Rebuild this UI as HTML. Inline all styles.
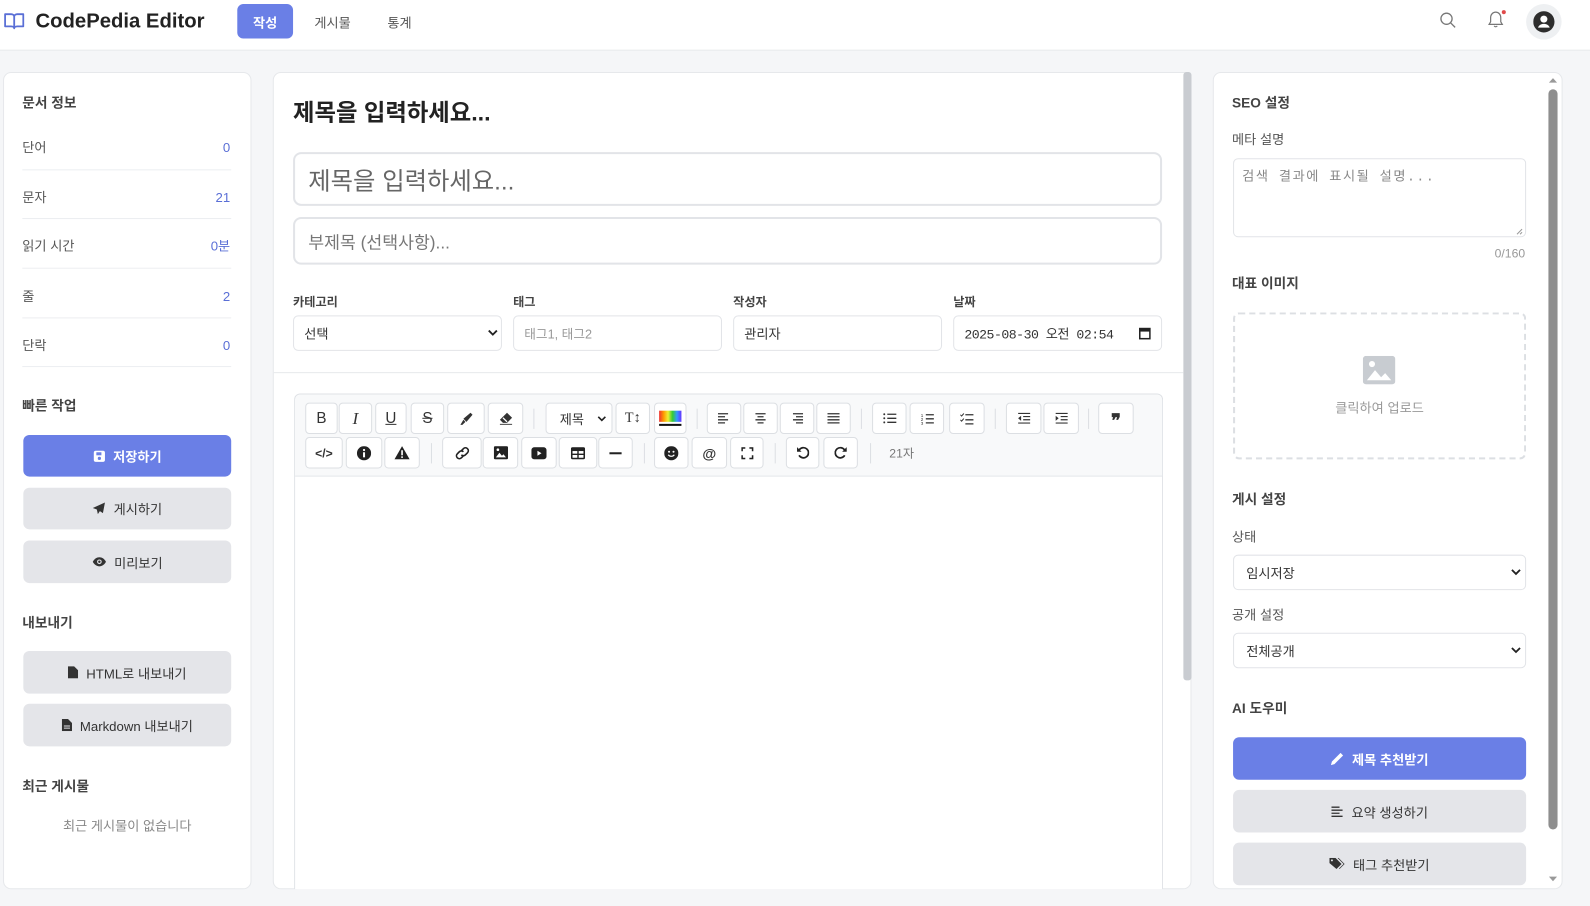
<!DOCTYPE html>
<html><head><meta charset="utf-8">
<style>
*{box-sizing:border-box;margin:0;padding:0}
html,body{width:1590px;height:906px;overflow:hidden;background:#f5f6f8;font-family:"Liberation Sans","Noto Sans CJK KR",sans-serif;color:#333}
#s{position:absolute;left:0;top:0;width:1568px;height:893px;transform:scale(1.01403);transform-origin:0 0}
.a{position:absolute}
.card{position:absolute;background:#fff;border:1px solid #e6e8eb;border-radius:8px}
.h{font-size:13.5px;font-weight:bold;color:#444;height:20px;line-height:20px}
.lbl{font-size:13px;color:#555;height:20px;line-height:20px}
.val{font-size:13px;color:#5a6fd6;height:20px;line-height:20px;text-align:right}
.sep{position:absolute;height:1px;background:#eceef1}
.btn{position:absolute;border-radius:6px;display:flex;align-items:center;justify-content:center;font-size:13px;gap:8px}
.pri{background:#6a7fe6;color:#fff;font-weight:bold}
.sec{background:#e4e5e9;color:#333}
.fld{position:absolute;border:1px solid #e2e4e8;border-radius:5px;background:#fff;font-size:13px;display:flex;align-items:center;padding-left:10px}
.tb{position:absolute;height:31px;border:1px solid #dcdfe3;border-radius:4px;background:#fff;display:flex;align-items:center;justify-content:center;font-size:14px;color:#333}
.vs{position:absolute;width:1px;height:20px;background:#dcdfe3}
</style></head><body><div id="s">
<!-- header -->
<div class="a" style="left:0;top:0;width:1568px;height:50px;background:#fff;border-bottom:1px solid #e6e8eb"></div>
<svg class="a" style="left:4px;top:12px" width="20" height="18" viewBox="0 0 20 18"><path d="M1 2h6c1.5 0 3 1 3 2.5V16c0-1-1-2-3-2H1z M19 2h-6c-1.5 0-3 1-3 2.5V16c0-1 1-2 3-2h6z" fill="none" stroke="#5a6fd6" stroke-width="1.8" stroke-linejoin="round"/></svg>
<div class="a" style="left:35px;top:9px;font-size:20px;font-weight:bold;color:#222;line-height:24px">CodePedia Editor</div>
<div class="btn pri" style="left:234px;top:4px;width:55px;height:34px;font-size:13px">작성</div>
<div class="a" style="left:310px;top:12px;font-size:13px;color:#555">게시물</div>
<div class="a" style="left:382px;top:12px;font-size:13px;color:#555">통계</div>
<svg class="a" style="left:1419px;top:11px" width="18" height="18" viewBox="0 0 18 18"><circle cx="7.5" cy="7.5" r="5.5" fill="none" stroke="#777" stroke-width="1.3"/><path d="M11.5 11.5l4.5 4.5" stroke="#777" stroke-width="1.3"/></svg>
<svg class="a" style="left:1466px;top:9px" width="20" height="20" viewBox="0 0 20 20"><path d="M9 3c-3 0-5 2.5-5 5.5v4L2.5 15h13L14 12.5v-4C14 5.5 12 3 9 3z M7.5 16.5a1.7 1.7 0 0 0 3 0" fill="none" stroke="#777" stroke-width="1.2"/><circle cx="17" cy="3" r="2" fill="#e04a4a"/></svg>
<div class="a" style="left:1505px;top:4px;width:35px;height:35px;border-radius:50%;background:#eef0f2"></div>
<svg class="a" style="left:1512px;top:11px" width="21" height="21" viewBox="0 0 20 20"><circle cx="10" cy="10" r="10" fill="#2d2d2d"/><circle cx="10" cy="7.5" r="3.3" fill="#fff"/><path d="M4.5 15.5c1-2.5 3-3.5 5.5-3.5s4.5 1 5.5 3.5" fill="#fff"/></svg>

<!-- left card -->
<div class="card" style="left:3px;top:71px;width:245px;height:806px"></div>
<div class="a h" style="left:22px;top:92px">문서 정보</div>
<div class="a lbl" style="left:22px;top:136px">단어</div><div class="a val" style="left:150px;width:77px;top:136px">0</div>
<div class="sep" style="left:22px;width:206px;top:167px"></div>
<div class="a lbl" style="left:22px;top:185px">문자</div><div class="a val" style="left:150px;width:77px;top:185px">21</div>
<div class="sep" style="left:22px;width:206px;top:215px"></div>
<div class="a lbl" style="left:22px;top:233px">읽기 시간</div><div class="a val" style="left:150px;width:77px;top:233px">0분</div>
<div class="sep" style="left:22px;width:206px;top:264px"></div>
<div class="a lbl" style="left:22px;top:283px">줄</div><div class="a val" style="left:150px;width:77px;top:283px">2</div>
<div class="sep" style="left:22px;width:206px;top:313px"></div>
<div class="a lbl" style="left:22px;top:331px">단락</div><div class="a val" style="left:150px;width:77px;top:331px">0</div>
<div class="sep" style="left:22px;width:206px;top:361px"></div>
<div class="a h" style="left:22px;top:391px">빠른 작업</div>
<div class="btn pri" style="left:23px;top:429px;width:205px;height:41px"><svg width="12" height="12" viewBox="0 0 12 12"><rect x="0.5" y="0.5" width="11" height="11" rx="2" fill="#fff"/><rect x="3" y="2" width="5" height="3" fill="#6a7fe6"/><circle cx="6" cy="8" r="1.6" fill="#6a7fe6"/></svg>저장하기</div>
<div class="btn sec" style="left:23px;top:481px;width:205px;height:41px"><svg width="13" height="13" viewBox="0 0 13 13"><path d="M12.5 0.5L0.5 6l4 1.5 1 4.5 2-3 3 2z" fill="#333"/></svg>게시하기</div>
<div class="btn sec" style="left:23px;top:533px;width:205px;height:42px"><svg width="14" height="10" viewBox="0 0 14 10"><path d="M0.5 5C2 2 4.5 0.5 7 0.5S12 2 13.5 5C12 8 9.5 9.5 7 9.5S2 8 0.5 5z" fill="#333"/><circle cx="7" cy="5" r="2.3" fill="#e4e5e9"/><circle cx="7" cy="5" r="1.2" fill="#333"/></svg>미리보기</div>
<div class="a h" style="left:22px;top:605px">내보내기</div>
<div class="btn sec" style="left:23px;top:642px;width:205px;height:42px"><svg width="10" height="12" viewBox="0 0 10 12"><path d="M0 0h6l4 4v8H0z" fill="#333"/></svg>HTML로 내보내기</div>
<div class="btn sec" style="left:23px;top:694px;width:205px;height:42px"><svg width="10" height="12" viewBox="0 0 10 12"><path d="M0 0h6l4 4v8H0z" fill="#333"/><path d="M2 7h6M2 9h6" stroke="#e4e5e9"/></svg>Markdown 내보내기</div>
<div class="a h" style="left:22px;top:766px">최근 게시물</div>
<div class="a" style="left:23px;width:205px;top:804px;text-align:center;font-size:13px;color:#888">최근 게시물이 없습니다</div>

<!-- center card -->
<div class="card" style="left:269px;top:71px;width:906px;height:806px;overflow:hidden"></div>
<div class="a" style="left:1167px;top:71px;width:8px;height:600px;background:#c9ccd1;border-radius:3px"></div>
<div class="a" style="left:289px;top:96px;font-size:23px;font-weight:bold;color:#222;line-height:30px">제목을 입력하세요...</div>
<div class="fld" style="left:289px;top:150px;width:857px;height:53px;border:2px solid #e2e4e8;border-radius:8px;font-size:24px;color:#666;padding-left:13px">제목을 입력하세요...</div>
<div class="fld" style="left:289px;top:214px;width:857px;height:47px;border:2px solid #e2e4e8;border-radius:8px;font-size:17px;color:#777;padding-left:13px">부제목 (선택사항)...</div>
<div class="a" style="left:289px;top:289px;font-size:12px;font-weight:bold;color:#444">카테고리</div>
<div class="a" style="left:506px;top:289px;font-size:12px;font-weight:bold;color:#444">태그</div>
<div class="a" style="left:723px;top:289px;font-size:12px;font-weight:bold;color:#444">작성자</div>
<div class="a" style="left:940px;top:289px;font-size:12px;font-weight:bold;color:#444">날짜</div>
<div class="fld" style="left:289px;top:311px;width:206px;height:35px">선택</div>
<svg class="a" style="left:481px;top:325px" width="10" height="7" viewBox="0 0 10 7"><path d="M1 1l4 4 4-4" fill="none" stroke="#222" stroke-width="1.8"/></svg>
<div class="fld" style="left:506px;top:311px;width:206px;height:35px;color:#999;font-size:12.5px">태그1, 태그2</div>
<div class="fld" style="left:723px;top:311px;width:206px;height:35px">관리자</div>
<div class="fld" style="left:940px;top:311px;width:206px;height:35px;font-size:13px;font-family:'Liberation Mono','Noto Sans CJK KR',monospace;letter-spacing:-0.5px">2025-08-30 오전 02:54</div>
<svg class="a" style="left:1123px;top:322px" width="12" height="13" viewBox="0 0 12 13"><rect x="1" y="2" width="10" height="10" fill="none" stroke="#222" stroke-width="1.5"/><rect x="1" y="2" width="10" height="3" fill="#222"/></svg>
<div class="sep" style="left:270px;width:897px;top:367px;background:#e6e8eb"></div>
<div class="a" style="left:290px;top:388px;width:857px;height:489px;border:1px solid #dfe2e6;border-bottom:none;border-radius:6px 6px 0 0;background:#fff"></div>
<div class="a" style="left:291px;top:389px;width:855px;height:81px;background:#f8f9fa;border-bottom:1px solid #dfe2e6;border-radius:6px 6px 0 0"></div>
<!-- toolbar row 1 -->
<div class="tb" style="left:301px;top:397px;width:32px;font-family:'Liberation Sans';font-size:15px">B</div>
<div class="tb" style="left:334px;top:397px;width:33px;font-family:'Liberation Serif';font-style:italic;font-size:17px">I</div>
<div class="tb" style="left:370px;top:397px;width:31px;text-decoration:underline;font-size:15px">U</div>
<div class="tb" style="left:405px;top:397px;width:33px;text-decoration:line-through;font-size:15px">S</div>
<div class="tb" style="left:441px;top:397px;width:37px"><svg width="14" height="14" viewBox="0 0 14 14"><path d="M11 1l2 2-6 7-3-3z" fill="#333"/><path d="M4 8l2 2-3 3H1z" fill="#333"/></svg></div>
<div class="tb" style="left:481px;top:397px;width:35px"><svg width="14" height="13" viewBox="0 0 14 13"><path d="M8 1l5 5-5 5H4L1 8z" fill="#333"/><path d="M4 6l4 4" stroke="#fff" stroke-width="1.3"/><path d="M1 12.5h12" stroke="#333"/></svg></div>
<div class="vs" style="left:526px;top:403px"></div>
<div class="tb" style="left:538px;top:397px;width:66px;font-size:13px;justify-content:flex-start;padding-left:13px">제목<svg style="position:absolute;right:5px;top:12px" width="9" height="6" viewBox="0 0 9 6"><path d="M1 1l3.5 3.5L8 1" fill="none" stroke="#222" stroke-width="1.6"/></svg></div>
<div class="tb" style="left:607px;top:397px;width:34px;font-size:14px;font-family:'Liberation Serif'">T↕</div>
<div class="tb" style="left:645px;top:397px;width:32px;flex-direction:column;gap:2px"><div style="width:22px;height:11px;background:linear-gradient(90deg,#e33,#f90,#ee3,#3c3,#39f,#63f)"></div><div style="width:22px;height:2px;background:#111"></div></div>
<div class="vs" style="left:687px;top:403px"></div>
<div class="tb" style="left:697px;top:397px;width:34px"><svg width="12" height="11" viewBox="0 0 12 11"><path d="M0 1h10M0 4h7M0 7h10M0 10h7" stroke="#333" stroke-width="1.3"/></svg></div>
<div class="tb" style="left:733px;top:397px;width:34px"><svg width="12" height="11" viewBox="0 0 12 11"><path d="M1 1h10M3 4h6M1 7h10M3 10h6" stroke="#333" stroke-width="1.3"/></svg></div>
<div class="tb" style="left:769px;top:397px;width:34px"><svg width="12" height="11" viewBox="0 0 12 11"><path d="M2 1h10M5 4h7M2 7h10M5 10h7" stroke="#333" stroke-width="1.3"/></svg></div>
<div class="tb" style="left:805px;top:397px;width:34px"><svg width="12" height="11" viewBox="0 0 12 11"><path d="M0 1h12M0 4h12M0 7h12M0 10h12" stroke="#333" stroke-width="1.3"/></svg></div>
<div class="vs" style="left:849px;top:403px"></div>
<div class="tb" style="left:860px;top:397px;width:34px"><svg width="13" height="11" viewBox="0 0 13 11"><path d="M4 1.5h9M4 5.5h9M4 9.5h9" stroke="#333" stroke-width="1.3"/><circle cx="1" cy="1.5" r="1" fill="#333"/><circle cx="1" cy="5.5" r="1" fill="#333"/><circle cx="1" cy="9.5" r="1" fill="#333"/></svg></div>
<div class="tb" style="left:897px;top:397px;width:34px"><svg width="13" height="12" viewBox="0 0 13 12"><path d="M5 2h8M5 6h8M5 10h8" stroke="#333" stroke-width="1.3"/><text x="0" y="4" font-size="4.5" fill="#333">1</text><text x="0" y="8" font-size="4.5" fill="#333">2</text><text x="0" y="12" font-size="4.5" fill="#333">3</text></svg></div>
<div class="tb" style="left:936px;top:397px;width:35px"><svg width="13" height="12" viewBox="0 0 13 12"><path d="M0 2l1.3 1.3L3.5 0.8M0 7l1.3 1.3L3.5 5.8" fill="none" stroke="#333" stroke-width="1"/><path d="M5 2h8M5 7h8M5 11h8" stroke="#333" stroke-width="1.3"/></svg></div>
<div class="vs" style="left:981px;top:403px"></div>
<div class="tb" style="left:992px;top:397px;width:35px"><svg width="12" height="11" viewBox="0 0 12 11"><path d="M0 0.7h12M5 3.8h7M5 6.9h7M0 10.2h12" stroke="#333" stroke-width="1.2"/><path d="M3 3v5L0 5.5z" fill="#333"/></svg></div>
<div class="tb" style="left:1029px;top:397px;width:35px"><svg width="12" height="11" viewBox="0 0 12 11"><path d="M0 0.7h12M5 3.8h7M5 6.9h7M0 10.2h12" stroke="#333" stroke-width="1.2"/><path d="M0 3v5l3-2.5z" fill="#333"/></svg></div>
<div class="vs" style="left:1073px;top:403px"></div>
<div class="tb" style="left:1083px;top:397px;width:35px;font-size:18px;font-weight:bold;padding-top:6px">❞</div>
<!-- row 2 -->
<div class="tb" style="left:301px;top:431px;width:37px;font-size:12px;font-weight:bold">&lt;/&gt;</div>
<div class="tb" style="left:341px;top:431px;width:36px"><svg width="14" height="14" viewBox="0 0 14 14"><circle cx="7" cy="7" r="7" fill="#222"/><rect x="6" y="6" width="2" height="5" fill="#fff"/><circle cx="7" cy="3.8" r="1.1" fill="#fff"/></svg></div>
<div class="tb" style="left:379px;top:431px;width:35px"><svg width="15" height="13" viewBox="0 0 15 13"><path d="M7.5 0L15 13H0z" fill="#222"/><rect x="6.7" y="4" width="1.6" height="5" fill="#fff"/><rect x="6.7" y="10" width="1.6" height="1.6" fill="#fff"/></svg></div>
<div class="vs" style="left:425px;top:437px"></div>
<div class="tb" style="left:436px;top:431px;width:39px"><svg width="16" height="14" viewBox="0 0 16 14"><path d="M7 4.5l2-2a2.8 2.8 0 0 1 4 4l-2 2a2.8 2.8 0 0 1-4 0 M9 9.5l-2 2a2.8 2.8 0 0 1-4-4l2-2a2.8 2.8 0 0 1 4 0" fill="none" stroke="#222" stroke-width="1.6"/></svg></div>
<div class="tb" style="left:476px;top:431px;width:35px"><svg width="14" height="13" viewBox="0 0 14 13"><rect width="14" height="13" rx="1.5" fill="#222"/><path d="M2 11l3.5-4.5 2.5 3 1.5-1.5 2.5 3z" fill="#fff"/><circle cx="4" cy="3.5" r="1.3" fill="#fff"/></svg></div>
<div class="tb" style="left:514px;top:431px;width:35px"><svg width="15" height="12" viewBox="0 0 15 12"><rect width="15" height="12" rx="3" fill="#222"/><path d="M6 3.5v5l4-2.5z" fill="#fff"/></svg></div>
<div class="tb" style="left:551px;top:431px;width:38px"><svg width="14" height="12" viewBox="0 0 14 12"><rect x="0.8" y="0.8" width="12.4" height="10.4" rx="1" fill="none" stroke="#222" stroke-width="1.6"/><rect x="0.8" y="0.8" width="12.4" height="3" fill="#222"/><path d="M7 3v8M1 7h12" stroke="#222" stroke-width="1.4"/></svg></div>
<div class="tb" style="left:590px;top:431px;width:34px"><div style="width:12px;height:2px;background:#222"></div></div>
<div class="vs" style="left:635px;top:437px"></div>
<div class="tb" style="left:645px;top:431px;width:34px"><svg width="14" height="14" viewBox="0 0 14 14"><circle cx="7" cy="7" r="7" fill="#222"/><circle cx="4.8" cy="5.5" r="1" fill="#fff"/><circle cx="9.2" cy="5.5" r="1" fill="#fff"/><path d="M4 8.5c1.5 2 4.5 2 6 0" fill="none" stroke="#fff" stroke-width="1.2"/></svg></div>
<div class="tb" style="left:682px;top:431px;width:35px;font-size:14px;font-weight:bold">@</div>
<div class="tb" style="left:720px;top:431px;width:33px"><svg width="12" height="12" viewBox="0 0 12 12"><path d="M0.8 4V0.8H4M8 0.8h3.2V4M11.2 8v3.2H8M4 11.2H0.8V8" fill="none" stroke="#222" stroke-width="1.6"/></svg></div>
<div class="vs" style="left:764px;top:437px"></div>
<div class="tb" style="left:775px;top:431px;width:33px"><svg width="13" height="13" viewBox="0 0 13 13"><path d="M3 4a5 5 0 1 1 0 5" fill="none" stroke="#222" stroke-width="1.7"/><path d="M1 1v4.5h4.5z" fill="#222"/></svg></div>
<div class="tb" style="left:812px;top:431px;width:34px"><svg width="13" height="13" viewBox="0 0 13 13"><path d="M10 4a5 5 0 1 0 0 5" fill="none" stroke="#222" stroke-width="1.7"/><path d="M12 1v4.5H7.5z" fill="#222"/></svg></div>
<div class="vs" style="left:858px;top:437px"></div>
<div class="a" style="left:877px;top:438px;font-size:12px;color:#777">21자</div>

<!-- right card -->
<div class="card" style="left:1196px;top:71px;width:345px;height:806px"></div>
<div class="a" style="left:1527px;top:88px;width:9px;height:730px;background:#8e8e8e;border-radius:5px"></div>
<svg class="a" style="left:1527px;top:76px" width="9" height="6"><path d="M0.5 5.5L4.5 1 8.5 5.5z" fill="#999"/></svg>
<svg class="a" style="left:1527px;top:864px" width="9" height="6"><path d="M0.5 0.5L4.5 5 8.5 0.5z" fill="#999"/></svg>
<div class="a h" style="left:1215px;top:92px">SEO 설정</div>
<div class="a lbl" style="left:1215px;top:128px">메타 설명</div>
<div class="a" style="left:1216px;top:156px;width:289px;height:78px;border:1px solid #e2e4e8;border-radius:5px"></div>
<div class="a" style="left:1225px;top:163px;font-size:13px;color:#888;letter-spacing:1.5px;font-family:'Liberation Mono','Noto Sans CJK KR',monospace">검색 결과에 표시될 설명...</div>
<svg class="a" style="left:1495px;top:225px" width="7" height="7"><path d="M1 6L6 1M4 6L6 4" stroke="#999"/></svg>
<div class="a" style="left:1440px;width:64px;top:243px;text-align:right;font-size:12px;color:#999">0/160</div>
<div class="a h" style="left:1215px;top:270px">대표 이미지</div>
<div class="a" style="left:1216px;top:308px;width:289px;height:145px;border:2px dashed #dcdfe3;border-radius:6px"></div>
<svg class="a" style="left:1344px;top:351px" width="32" height="28" viewBox="0 0 32 28"><rect width="32" height="28" rx="3" fill="#c8ccd1"/><path d="M4 24l8-10 6 7 4-4 6 7z" fill="#fff"/><circle cx="9" cy="8" r="3" fill="#fff"/></svg>
<div class="a" style="left:1216px;width:289px;top:392px;text-align:center;font-size:13px;color:#999">클릭하여 업로드</div>
<div class="a h" style="left:1215px;top:483px">게시 설정</div>
<div class="a lbl" style="left:1215px;top:520px">상태</div>
<div class="fld" style="left:1216px;top:547px;width:289px;height:35px;padding-left:12px">임시저장</div>
<svg class="a" style="left:1490px;top:561px" width="10" height="7" viewBox="0 0 10 7"><path d="M1 1l4 4 4-4" fill="none" stroke="#222" stroke-width="1.8"/></svg>
<div class="a lbl" style="left:1215px;top:597px">공개 설정</div>
<div class="fld" style="left:1216px;top:624px;width:289px;height:35px;padding-left:12px">전체공개</div>
<svg class="a" style="left:1490px;top:638px" width="10" height="7" viewBox="0 0 10 7"><path d="M1 1l4 4 4-4" fill="none" stroke="#222" stroke-width="1.8"/></svg>
<div class="a h" style="left:1215px;top:689px">AI 도우미</div>
<div class="btn pri" style="left:1216px;top:727px;width:289px;height:42px"><svg width="13" height="13" viewBox="0 0 13 13"><path d="M10 0.5l2.5 2.5L4 11.5 0.5 12.5 1.5 9z" fill="#fff"/></svg>제목 추천받기</div>
<div class="btn sec" style="left:1216px;top:779px;width:289px;height:42px"><svg width="12" height="11" viewBox="0 0 12 11"><path d="M0 1h8M0 4h11M0 7h8M0 10h11" stroke="#333" stroke-width="1.3"/></svg>요약 생성하기</div>
<div class="btn sec" style="left:1216px;top:831px;width:289px;height:42px"><svg width="15" height="12" viewBox="0 0 15 12"><path d="M0 0h6l6 6-5 5-7-6z" fill="#333"/><path d="M8 0h1l6 6-5 5-.5-.5L14 6z" fill="#333"/><circle cx="2.5" cy="2.5" r="1" fill="#e4e5e9"/></svg>태그 추천받기</div>
</div></body></html>
